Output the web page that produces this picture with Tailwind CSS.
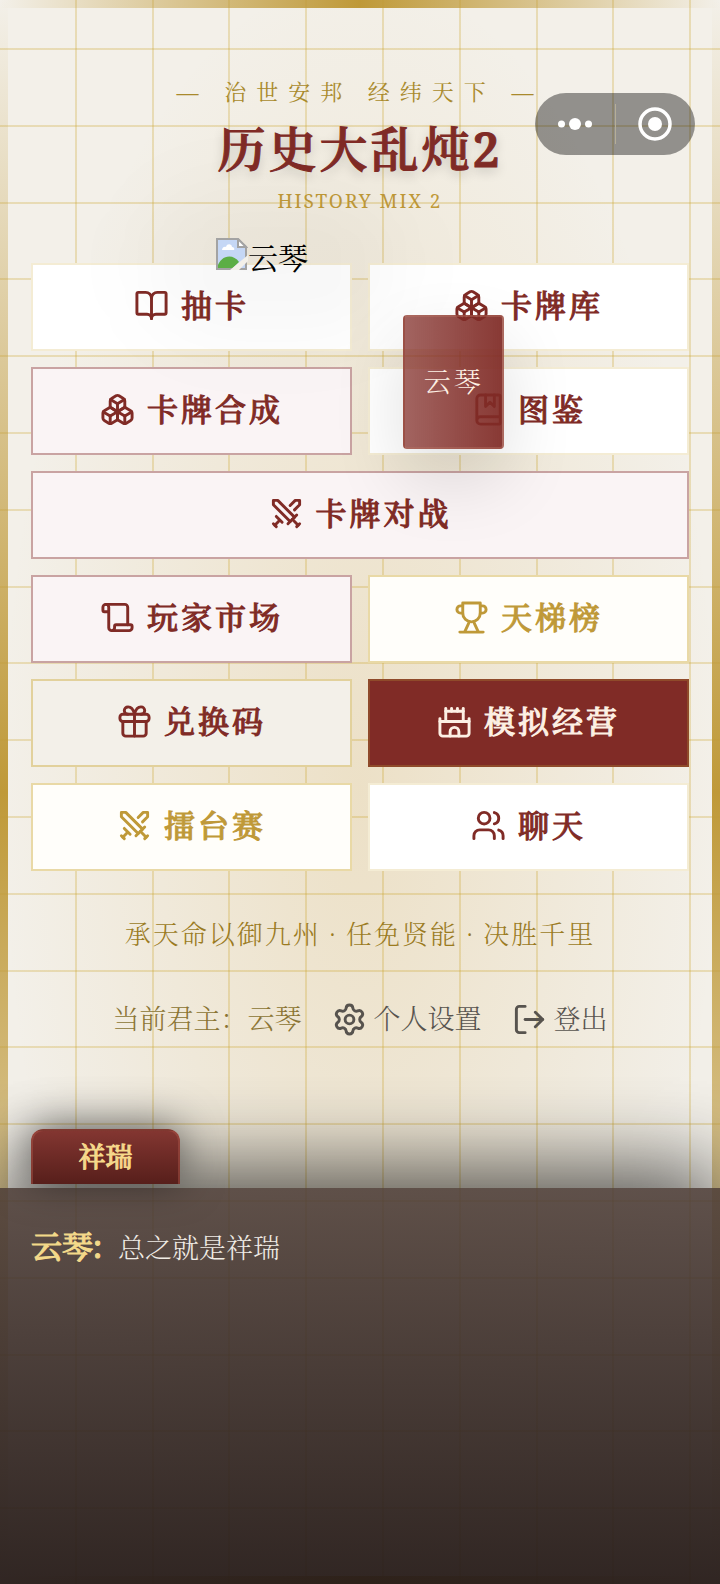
<!DOCTYPE html>
<html lang="zh-CN">
<head>
    <meta charset="UTF-8">
    <meta name="viewport" content="width=device-width, initial-scale=1.0">
    <title>历史大乱炖2</title>
    <script src="https://cdn.jsdelivr.net/npm/@tailwindcss/browser@4"></script>
</head>
<body class="relative flex flex-col min-h-screen overflow-hidden bg-[#f3f0e9] bg-[radial-gradient(ellipse_50%_52%_at_50%_50%,#cf9c3230,transparent)] font-['Noto_Serif','Noto_Serif_CJK_SC','Noto_Serif_SC','Liberation_Serif','Noto_Sans_CJK_SC',serif]">

    <!-- Grid and gold frame -->
    <div class="absolute inset-0 bg-[repeating-linear-gradient(0deg,transparent_0_4.68rem,#c9a22745_4.68rem_4.8rem),repeating-linear-gradient(90deg,transparent_0_4.68rem,#c9a22745_4.68rem_4.8rem)]"></div>
    <div class="absolute inset-x-0 top-0 h-2 bg-linear-to-r from-transparent via-[#bf9938] to-transparent"></div>
    <div class="absolute inset-x-0 bottom-0 h-2 bg-linear-to-r from-transparent via-[#bf9938] to-transparent"></div>
    <div class="absolute inset-y-0 left-0 w-2 bg-linear-to-b from-transparent via-[#bf9938] to-transparent"></div>
    <div class="absolute inset-y-0 right-0 w-2 bg-linear-to-b from-transparent via-[#bf9938] to-transparent"></div>

    <svg class="hidden">
        <symbol id="boxes" viewBox="0 0 24 24">
            <path d="M2.97 12.92A2 2 0 0 0 2 14.63v3.24a2 2 0 0 0 .97 1.71l3 1.8a2 2 0 0 0 2.06 0L12 19v-5.5l-5-3-4.03 2.42Z"/><path d="m7 16.5-4.74-2.85"/><path d="m7 16.5 5-3"/><path d="M7 16.5v5.17"/><path d="M12 13.5V19l3.97 2.38a2 2 0 0 0 2.06 0l3-1.8a2 2 0 0 0 .97-1.71v-3.24a2 2 0 0 0-.97-1.71L17 10.5l-5 3Z"/><path d="m17 16.5-5-3"/><path d="m17 16.5 4.74-2.85"/><path d="M17 16.5v5.17"/><path d="M7.97 4.42A2 2 0 0 0 7 6.13v4.37l5 3 5-3V6.13a2 2 0 0 0-.97-1.71l-3-1.8a2 2 0 0 0-2.06 0l-3 1.8Z"/><path d="M12 8 7.26 5.15"/><path d="m12 8 4.74-2.85"/><path d="M12 13.5V8"/>
        </symbol>
        <symbol id="swords" viewBox="0 0 24 24">
            <path d="M14.5 17.5 3 6V3h3l11.5 11.5"/><path d="m13 19 6-6"/><path d="m16 16 4 4"/><path d="m19 21 2-2"/><path d="M14.5 6.5 18 3h3v3l-3.5 3.5"/><path d="m5 14 4 4"/><path d="m7 17-3 3"/><path d="m3 19 2 2"/>
        </symbol>
    </svg>

    <main class="relative px-[31px]">
        <header class="pt-[75px] text-center">
            <p class="text-[22px] leading-8 tracking-[10px] text-[#a98a2c]">— 治世安邦 经纬天下 —</p>
            <h1 class="mt-1.5 text-5xl leading-[72px] font-semibold tracking-[3px] text-[#802b26] [-webkit-text-stroke:1px] text-shadow-[0_4px_12px_#00000033]">历史大乱炖2</h1>
            <p class="text-[19px] leading-8 tracking-[2px] text-[#bf9938]">HISTORY MIX 2</p>
        </header>

        <!-- Menu -->
        <nav class="mt-[46px] grid grid-cols-2 gap-4 text-[31px] font-medium tracking-[3px] text-[#802b26]">
            <button class="flex h-22 items-center justify-center gap-3 border-2 border-[#c9a22733] bg-white pb-1">
                <svg class="size-[35px] fill-none stroke-current stroke-2" stroke-linecap="round" stroke-linejoin="round" viewBox="0 0 24 24"><path d="M12 7v14"/><path d="M3 18a1 1 0 0 1-1-1V4a1 1 0 0 1 1-1h5a4 4 0 0 1 4 4 4 4 0 0 1 4-4h5a1 1 0 0 1 1 1v13a1 1 0 0 1-1 1h-6a3 3 0 0 0-3 3 3 3 0 0 0-3-3z"/></svg>
                <span class="[-webkit-text-stroke:1px]">抽卡</span>
            </button>
            <button class="flex h-22 items-center justify-center gap-3 border-2 border-[#c9a22733] bg-white pb-1">
                <svg class="size-[35px] fill-none stroke-current stroke-2" stroke-linecap="round" stroke-linejoin="round"><use href="#boxes"/></svg>
                <span class="[-webkit-text-stroke:1px]">卡牌库</span>
            </button>
            <button class="flex h-22 items-center justify-center gap-3 border-2 border-[#802b2666] bg-[#faf4f5] pb-1">
                <svg class="size-[35px] fill-none stroke-current stroke-2" stroke-linecap="round" stroke-linejoin="round"><use href="#boxes"/></svg>
                <span class="[-webkit-text-stroke:1px]">卡牌合成</span>
            </button>
            <button class="flex h-22 items-center justify-center gap-3 border-2 border-[#c9a22733] bg-white pb-1">
                <svg class="size-[35px] fill-none stroke-current stroke-2" stroke-linecap="round" stroke-linejoin="round" viewBox="0 0 24 24"><path d="M10 2v8l3-3 3 3V2"/><path d="M4 19.5v-15A2.5 2.5 0 0 1 6.5 2H19a1 1 0 0 1 1 1v18a1 1 0 0 1-1 1H6.5a1 1 0 0 1 0-5H20"/></svg>
                <span class="[-webkit-text-stroke:1px]">图鉴</span>
            </button>
            <button class="col-span-2 flex h-22 items-center justify-center gap-3 border-2 border-[#802b2666] bg-[#faf4f5] pb-1">
                <svg class="size-[35px] fill-none stroke-current stroke-2" stroke-linecap="round" stroke-linejoin="round"><use href="#swords"/></svg>
                <span class="[-webkit-text-stroke:1px]">卡牌对战</span>
            </button>
            <button class="flex h-22 items-center justify-center gap-3 border-2 border-[#802b2666] bg-[#faf4f5] pb-1">
                <svg class="size-[35px] fill-none stroke-current stroke-2" stroke-linecap="round" stroke-linejoin="round" viewBox="0 0 24 24"><path d="M19 17V5a2 2 0 0 0-2-2H4"/><path d="M8 21h12a2 2 0 0 0 2-2v-1a1 1 0 0 0-1-1H11a1 1 0 0 0-1 1v1a2 2 0 1 1-4 0V5a2 2 0 1 0-4 0v2a1 1 0 0 0 1 1h3"/></svg>
                <span class="[-webkit-text-stroke:1px]">玩家市场</span>
            </button>
            <button class="flex h-22 items-center justify-center gap-3 border-2 border-[#c9a22766] bg-[#fffefa] pb-1 text-[#bf9938]">
                <svg class="size-[35px] fill-none stroke-current stroke-2" stroke-linecap="round" stroke-linejoin="round" viewBox="0 0 24 24"><path d="M6 9H4.5a2.5 2.5 0 0 1 0-5H6"/><path d="M18 9h1.5a2.5 2.5 0 0 0 0-5H18"/><path d="M4 22h16"/><path d="m10.5 15-3 6.5"/><path d="m13.5 15 3 6.5"/><path d="M18 2H6v7a6 6 0 0 0 12 0V2Z"/></svg>
                <span class="[-webkit-text-stroke:1px]">天梯榜</span>
            </button>
            <button class="flex h-22 items-center justify-center gap-3 border-2 border-[#c9a22766] bg-[#f3f0e9] pb-1">
                <svg class="size-[35px] fill-none stroke-current stroke-2" stroke-linecap="round" stroke-linejoin="round" viewBox="0 0 24 24"><rect x="2" y="7" width="20" height="5" rx="2"/><path d="M12 7v15"/><path d="M20 12v8a2 2 0 0 1-2 2H6a2 2 0 0 1-2-2v-8"/><path d="M7.5 7a2.5 2.5 0 0 1 0-5A4.8 8 0 0 1 12 7a4.8 8 0 0 1 4.5-5 2.5 2.5 0 0 1 0 5"/></svg>
                <span class="[-webkit-text-stroke:1px]">兑换码</span>
            </button>
            <button class="flex h-22 items-center justify-center gap-3 border-2 border-[#8f4a2a] bg-[#802b26] pb-1 text-[#fdf0e4]">
                <svg class="size-[35px] fill-none stroke-current stroke-2" stroke-linecap="round" stroke-linejoin="round" viewBox="0 0 24 24"><path d="M22 10v10a2 2 0 0 1-2 2H4a2 2 0 0 1-2-2V10"/><path d="M2 12h20"/><path d="M18 12V5H6v7"/><path d="M15 22v-3a3 3 0 0 0-6 0v3"/><path d="M6 5V3"/><path d="M18 5V3"/><path d="M10 5V3"/><path d="M14 5V3"/></svg>
                <span class="[-webkit-text-stroke:1px]">模拟经营</span>
            </button>
            <button class="flex h-22 items-center justify-center gap-3 border-2 border-[#c9a22766] bg-[#fffefa] pb-1 text-[#bf9938]">
                <svg class="size-[35px] fill-none stroke-current stroke-2" stroke-linecap="round" stroke-linejoin="round"><use href="#swords"/></svg>
                <span class="[-webkit-text-stroke:1px]">擂台赛</span>
            </button>
            <button class="flex h-22 items-center justify-center gap-3 border-2 border-[#c9a22733] bg-white pb-1">
                <svg class="size-[35px] fill-none stroke-current stroke-2" stroke-linecap="round" stroke-linejoin="round" viewBox="0 0 24 24"><path d="M16 21v-2a4 4 0 0 0-4-4H6a4 4 0 0 0-4 4v2"/><circle cx="9" cy="7" r="4"/><path d="M22 21v-2a4 4 0 0 0-3-3.87"/><path d="M16 3.13a4 4 0 0 1 0 7.75"/></svg>
                <span class="[-webkit-text-stroke:1px]">聊天</span>
            </button>
        </nav>

        <footer class="mt-[43px] text-center font-light text-[#9b7b1f]">
            <p class="text-[26px] leading-10 tracking-[2px]">承天命以御九州 · 任免贤能 · 决胜千里</p>
            <div class="mt-[45px] flex items-center justify-center gap-[30px] text-[27px] leading-10 text-[#8b7433]">
                <span>当前君主：云琴</span>
                <a href="#settings" class="flex items-center gap-[7px] text-[#57534e]">
                    <svg class="size-[35px] fill-none stroke-current stroke-2" stroke-linecap="round" stroke-linejoin="round" viewBox="0 0 24 24"><path d="M9.671 4.136a2.34 2.34 0 0 1 4.659 0 2.34 2.34 0 0 0 3.319 1.915 2.34 2.34 0 0 1 2.33 4.033 2.34 2.34 0 0 0 0 3.831 2.34 2.34 0 0 1-2.33 4.033 2.34 2.34 0 0 0-3.319 1.915 2.34 2.34 0 0 1-4.659 0 2.34 2.34 0 0 0-3.32-1.915 2.34 2.34 0 0 1-2.33-4.033 2.34 2.34 0 0 0 0-3.831A2.34 2.34 0 0 1 6.35 6.051a2.34 2.34 0 0 0 3.319-1.915"/><circle cx="12" cy="12" r="3"/></svg>
                    个人设置
                </a>
                <a href="#logout" class="flex items-center gap-[7px] text-[#57534e]">
                    <svg class="size-[35px] fill-none stroke-current stroke-2" stroke-linecap="round" stroke-linejoin="round" viewBox="0 0 24 24"><path d="M9 21H5a2 2 0 0 1-2-2V5a2 2 0 0 1 2-2h4"/><path d="m16 17 5-5-5-5"/><path d="M21 12H9"/></svg>
                    登出
                </a>
            </div>
        </footer>
    </main>

    <!-- Floating character and card -->
    <div class="absolute top-48 left-[20%] h-36 w-64 rounded-full bg-black/3 blur-2xl"></div>
    <div class="absolute top-[238px] left-[30%] flex items-start text-3xl leading-10 text-black">
        <svg class="size-8" viewBox="0 0 32 32"><path d="M1 1h21l8 8v22H1z" fill="#c5d7f5"/><path d="M1 30c3-13 16-15 22-6l-6 6z" fill="#5cae45"/><path d="M6 12c0-3 3-4 4-3 1-4 6-3 6 0 2 0 3 2 2 3z" fill="#fff"/><path d="M1 1h21l8 8v22H1z" fill="none" stroke="#a3a3a3" stroke-width="2"/><path d="M22 1v8h8z" fill="#fff" stroke="#a3a3a3" stroke-width="2"/><path d="M32 17v6l-9 9h-9z" fill="#f3f0e9"/></svg>
        云琴
    </div>
    <div class="absolute top-[315px] left-[56%] flex h-[134px] w-[101px] items-center justify-center rounded-sm border-2 border-[#b8736266] bg-linear-to-r from-[#802b26bb] to-[#802b26ee] text-[27px] font-light tracking-[3px] text-[#fdf0e4] shadow-[0_30px_70px_#00000020]">云琴</div>

    <!-- Mini program capsule -->
    <div class="absolute top-[93px] right-[25px] flex h-[62px] w-40 items-center rounded-full bg-black/40">
        <button class="flex h-full flex-1 items-center justify-center" aria-label="更多">
            <svg class="h-3 w-9 fill-white" viewBox="0 0 36 12"><circle cx="4.5" cy="6" r="3.5"/><circle cx="18" cy="6" r="6"/><circle cx="31.5" cy="6" r="3.5"/></svg>
        </button>
        <span class="h-10 w-px bg-[#b5ae98]"></span>
        <button class="flex h-full flex-1 items-center justify-center" aria-label="关闭">
            <svg class="size-[34px]" viewBox="0 0 34 34"><circle cx="17" cy="17" r="15" fill="none" stroke="#fff" stroke-width="3.5"/><circle cx="17" cy="17" r="7" fill="#fff"/></svg>
        </button>
    </div>

    <!-- Dialogue -->
    <section class="relative mt-auto">
        <div class="relative z-10 ml-[31px] mb-1 flex h-[55px] w-[149px] items-center justify-center rounded-t-xl border-2 border-b-0 border-[#a8524680] bg-linear-to-b from-[#833631] to-[#571f1b] text-[27px] font-medium text-[#f6d98b] shadow-[0_-4px_40px_#00000080] [-webkit-text-stroke:1px]">祥瑞</div>
        <div class="h-[396px] bg-linear-to-b from-[#4b3b35e0] to-[#261b18f2] px-[31px] pt-8 shadow-[0_-20px_80px_#000000a6]">
            <p class="flex items-baseline gap-4 text-[27px] leading-[52px] font-light text-[#f0ece6]">
                <strong class="text-[31px] font-medium text-[#f3d98a] [-webkit-text-stroke:1px]">云琴:</strong>
                总之就是祥瑞
            </p>
        </div>
    </section>

</body>
</html>
